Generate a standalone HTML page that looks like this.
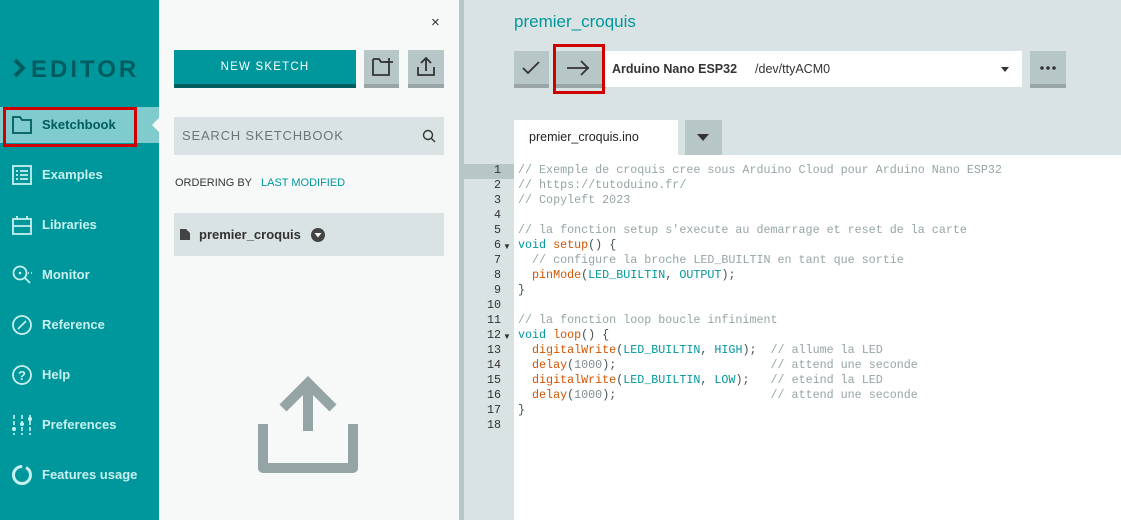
<!DOCTYPE html>
<html><head><meta charset="utf-8"><style>
*{margin:0;padding:0;box-sizing:border-box}
body{width:1121px;height:520px;overflow:hidden;position:relative;font-family:"Liberation Sans",sans-serif;background:#dae3e3}
.abs{position:absolute}
#side{left:0;top:0;width:159px;height:520px;background:#00979c}
.item{position:absolute;left:0;width:159px;height:36px;color:#c7f0ee;font-weight:bold;font-size:13px;line-height:36px;padding-left:42px}
.item svg{position:absolute;left:11px;top:7px}
#panel{left:159px;top:0;width:300px;height:520px;background:#f7f8f8}
.code{font-family:"Liberation Mono",monospace;font-size:11.7px;line-height:15px;white-space:pre;color:#434f54}
.c{color:#95a5a6}.k{color:#00979c}.f{color:#d35400}.n{color:#7f8c8d}
</style></head><body>
<div id="side" class="abs">
 <div class="abs" style="left:13px;top:56px;color:#005c5f;font-size:24px;font-weight:bold;letter-spacing:3px">
  <svg width="18" height="20" style="vertical-align:-1px" viewBox="0 0 18 20"><path d="M2 2 L10 10 L2 18" stroke="#005c5f" stroke-width="4" fill="none"/></svg>EDITOR</div>
 <div class="item" style="top:107px;background:#7fcbcd;color:#005c5f">
  <svg width="22" height="22" viewBox="0 0 22 22"><path d="M2 3h7l2 3h9v13H2z" fill="none" stroke="#005c5f" stroke-width="1.8"/></svg>Sketchbook</div>
 <div class="abs" style="left:3px;top:107px;width:134px;height:40px;border:3px solid #d00000"></div>
 <div class="abs" style="left:152px;top:118px;width:0;height:0;border-top:7px solid transparent;border-bottom:7px solid transparent;border-right:7px solid #f7f8f8"></div>
 <div class="item" style="top:157px"><svg width="22" height="22"><rect x="2" y="2" width="18" height="18" fill="none" stroke="#c7f0ee" stroke-width="1.8"/><path d="M5 7h2M9 7h8M5 11h2M9 11h8M5 15h2M9 15h8" stroke="#c7f0ee" stroke-width="1.8"/></svg>Examples</div>
 <div class="item" style="top:207px"><svg width="22" height="22"><rect x="2" y="5" width="18" height="15" fill="none" stroke="#c7f0ee" stroke-width="1.8"/><path d="M2 12h18M6 5V2M16 5V2" stroke="#c7f0ee" stroke-width="1.8"/></svg>Libraries</div>
 <div class="item" style="top:257px"><svg width="22" height="22"><circle cx="9" cy="9" r="6.5" fill="none" stroke="#c7f0ee" stroke-width="1.8"/><path d="M13.5 13.5 19 19M17 9h1M20 9h1" stroke="#c7f0ee" stroke-width="1.8"/><circle cx="9" cy="9" r="1.3" fill="#c7f0ee"/></svg>Monitor</div>
 <div class="item" style="top:307px"><svg width="22" height="22"><circle cx="11" cy="11" r="9" fill="none" stroke="#c7f0ee" stroke-width="1.8"/><path d="M7 15 15 7" stroke="#c7f0ee" stroke-width="1.8"/></svg>Reference</div>
 <div class="item" style="top:357px"><svg width="22" height="22"><circle cx="11" cy="11" r="9" fill="none" stroke="#c7f0ee" stroke-width="1.8"/><text x="11" y="16" text-anchor="middle" font-size="13" font-weight="bold" fill="#c7f0ee" font-family="Liberation Sans">?</text></svg>Help</div>
 <div class="item" style="top:407px"><svg width="22" height="22"><path d="M3 1v20M11 1v20M19 1v20" stroke="#c7f0ee" stroke-width="1.6" stroke-dasharray="4 2"/><circle cx="3" cy="15" r="2" fill="#c7f0ee"/><circle cx="11" cy="10" r="2" fill="#c7f0ee"/><circle cx="19" cy="5" r="2" fill="#c7f0ee"/></svg>Preferences</div>
 <div class="item" style="top:457px"><svg width="22" height="22"><circle cx="11" cy="11" r="8.5" fill="none" stroke="#c7f0ee" stroke-width="3" stroke-dasharray="40 4 9 2"/></svg>Features usage</div>
</div>
<div id="panel" class="abs">
 <div class="abs" style="left:272px;top:14px;font-size:15px;color:#333">×</div>
 <div class="abs" style="left:15px;top:50px;width:182px;height:38px;background:#00979c;border-bottom:4px solid #005c5f;color:#fff;font-size:11.5px;letter-spacing:1.2px;text-align:center;line-height:34px">NEW SKETCH</div>
 <div class="abs" style="left:205px;top:50px;width:35px;height:38px;background:#b7c6c7;border-bottom:4px solid #9aa6a6"><svg width="35" height="34"><path d="M9 9h6l2 3h9M9 9v16h16V16" fill="none" stroke="#333" stroke-width="1.8"/><path d="M25 8v8M21 12h8" stroke="#333" stroke-width="1.8"/></svg></div>
 <div class="abs" style="left:249px;top:50px;width:36px;height:38px;background:#b7c6c7;border-bottom:4px solid #9aa6a6"><svg width="36" height="34"><path d="M10 17v8h16v-8M18 21V8M13 13l5-5 5 5" fill="none" stroke="#333" stroke-width="1.8"/></svg></div>
 <div class="abs" style="left:15px;top:117px;width:270px;height:38px;background:#dae3e3;color:#6b7679;font-size:13px;letter-spacing:0.8px;line-height:38px;padding-left:8px">SEARCH SKETCHBOOK<svg class="abs" style="left:248px;top:12px" width="14" height="14"><circle cx="6" cy="6" r="4.5" fill="none" stroke="#333" stroke-width="1.4"/><path d="M9 9l4 4" stroke="#333" stroke-width="1.4"/></svg></div>
 <div class="abs" style="left:16px;top:177px;font-size:11px;color:#333">ORDERING BY &nbsp; <span style="color:#00979c">LAST MODIFIED</span></div>
 <div class="abs" style="left:15px;top:213px;width:270px;height:43px;background:#dae3e3;font-size:13px;font-weight:bold;color:#333;line-height:43px;padding-left:25px">premier_croquis
  <svg class="abs" style="left:6px;top:16px" width="10" height="11"><path d="M0 0h6l4 4v7H0z" fill="#444"/></svg>
  <svg class="abs" style="left:137px;top:15px" width="14" height="14"><circle cx="7" cy="7" r="7" fill="#444"/><path d="M3.5 5h7L7 9.5z" fill="#f7f8f8"/></svg></div>
 <svg class="abs" style="left:99px;top:376px" width="102" height="100"><path d="M5 48v44h90V48" fill="none" stroke="#95a5a6" stroke-width="10" stroke-linejoin="round"/><path d="M50 55V8M25 32 50 7 75 32" fill="none" stroke="#95a5a6" stroke-width="10"/></svg>
</div>
<div class="abs" style="left:459px;top:0;width:5px;height:520px;background:#b7c6c7"></div>
<div class="abs" style="left:514px;top:12px;font-size:17px;color:#00979c">premier_croquis</div>
<div class="abs" style="left:514px;top:51px;width:35px;height:37px;background:#b7c6c7;border-bottom:4px solid #9aa6a6"><svg width="35" height="33"><path d="M9 17l5 5 11-11" fill="none" stroke="#333" stroke-width="1.8"/></svg></div>
<div class="abs" style="left:554px;top:51px;width:52px;height:37px;background:#b7c6c7;border-bottom:4px solid #9aa6a6"></div>
<svg class="abs" style="left:565px;top:58px" width="28" height="20"><path d="M2 10h22M16 3l7 7-7 7" fill="none" stroke="#333" stroke-width="1.8"/></svg>
<div class="abs" style="left:553px;top:44px;width:52px;height:50px;border:3px solid #d00000"></div>
<div class="abs" style="left:605px;top:51px;width:417px;height:36px;background:#fff;font-size:12.5px;color:#333;line-height:36px;padding-left:7px"><b>Arduino Nano ESP32</b><span style="margin-left:18px">/dev/ttyACM0</span>
 <div class="abs" style="left:396px;top:16px;border-left:4px solid transparent;border-right:4px solid transparent;border-top:5px solid #333"></div></div>
<div class="abs" style="left:1030px;top:51px;width:36px;height:37px;background:#b7c6c7;border-bottom:4px solid #9aa6a6"><svg width="36" height="33"><circle cx="12" cy="17" r="1.8" fill="#333"/><circle cx="18" cy="17" r="1.8" fill="#333"/><circle cx="24" cy="17" r="1.8" fill="#333"/></svg></div>
<div class="abs" style="left:514px;top:120px;width:164px;height:35px;background:#fff;font-size:12.5px;color:#222;line-height:35px;padding-left:15px">premier_croquis.ino</div>
<div class="abs" style="left:685px;top:120px;width:37px;height:35px;background:#b7c6c7"><div class="abs" style="left:12px;top:14px;border-left:6px solid transparent;border-right:6px solid transparent;border-top:7px solid #333"></div></div>
<div class="abs" style="left:514px;top:155px;width:607px;height:365px;background:#fff"></div>
<div class="abs" style="left:464px;top:164px;width:50px;height:15px;background:#b7c6c7"></div>
<div class="abs code" style="left:464px;top:163px;width:37px;text-align:right;color:#333">1
2
3
4
5
6
7
8
9
10
11
12
13
14
15
16
17
18</div>
<div class="abs" style="left:503px;top:242px;font-size:8px;color:#333">▼</div>
<div class="abs" style="left:503px;top:332px;font-size:8px;color:#333">▼</div>
<div class="abs code" style="left:518px;top:163px"><span class="c">// Exemple de croquis cree sous Arduino Cloud pour Arduino Nano ESP32
// https://tutoduino.fr/
// Copyleft 2023</span>

<span class="c">// la fonction setup s'execute au demarrage et reset de la carte</span>
<span class="k">void</span> <span class="f">setup</span>() {
  <span class="c">// configure la broche LED_BUILTIN en tant que sortie</span>
  <span class="f">pinMode</span>(<span class="k">LED_BUILTIN</span>, <span class="k">OUTPUT</span>);
}

<span class="c">// la fonction loop boucle infiniment</span>
<span class="k">void</span> <span class="f">loop</span>() {
  <span class="f">digitalWrite</span>(<span class="k">LED_BUILTIN</span>, <span class="k">HIGH</span>);  <span class="c">// allume la LED</span>
  <span class="f">delay</span>(<span class="n">1000</span>);                      <span class="c">// attend une seconde</span>
  <span class="f">digitalWrite</span>(<span class="k">LED_BUILTIN</span>, <span class="k">LOW</span>);   <span class="c">// eteind la LED</span>
  <span class="f">delay</span>(<span class="n">1000</span>);                      <span class="c">// attend une seconde</span>
}
</div>
</body></html>
